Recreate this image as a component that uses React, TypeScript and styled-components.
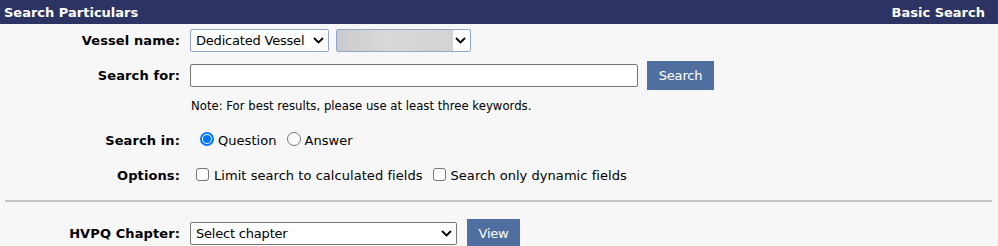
import styled, { createGlobalStyle } from "styled-components";

const GlobalStyle = createGlobalStyle`
  html, body {
    margin: 0;
    padding: 0;
    background: #f7f7f7;
  }
  body {
    font-family: "DejaVu Sans", Verdana, sans-serif;
    color: #000;
  }
`;

const Panel = styled.div`
  width: 998px;
  height: 246px;
  overflow: hidden;
  background: #f7f7f7;
`;

const TitleBar = styled.div`
  height: 24px;
  background: #2d3363;
  color: #fff;
  display: flex;
  align-items: center;
  justify-content: space-between;
  padding: 0 13px 0 4px;
  font-size: 13px;
  font-weight: bold;
  letter-spacing: 0;
`;

const Form = styled.div`
  display: grid;
  grid-template-columns: 180px 1fr;
  column-gap: 10px;
  align-items: center;
  padding-top: 5px;
`;

const Label = styled.label<{ $top?: number }>`
  justify-self: end;
  font-size: 13px;
  font-weight: bold;
  letter-spacing: 0.1px;
  margin-top: ${(p) => p.$top ?? 0}px;
`;

const Cell = styled.div<{ $top?: number }>`
  display: flex;
  align-items: center;
  margin-top: ${(p) => p.$top ?? 0}px;
`;

const SelectBox = styled.div<{ $width: number; $border: string; $skeleton?: boolean }>`
  position: relative;
  width: ${(p) => p.$width}px;
  height: 23px;
  box-sizing: border-box;
  border: 1px solid ${(p) => p.$border};
  border-radius: 2px;
  background: ${(p) =>
    p.$skeleton
      ? "linear-gradient(90deg, #cbcbce 0%, #d9d9dc 45%, #d3d3d6 100%) no-repeat left / calc(100% - 17px) 100%, #fff"
      : "#fff"};
  display: flex;
  align-items: center;
  padding-left: 5px;
  font-size: 13px;
  letter-spacing: -0.2px;
  margin-right: 7px;
`;

const Chevron = styled.svg`
  position: absolute;
  right: 4px;
  top: 7px;
`;

const TextInput = styled.div`
  width: 448px;
  height: 23px;
  box-sizing: border-box;
  border: 1px solid #767676;
  border-radius: 2px;
  background: #fff;
  margin-right: 9px;
`;

const Button = styled.button<{ $width: number }>`
  width: ${(p) => p.$width}px;
  height: 29px;
  border: none;
  background: #4f6fa0;
  color: #fff;
  font-family: "DejaVu Sans", Verdana, sans-serif;
  font-size: 13px;
  letter-spacing: -0.2px;
  padding: 0;
`;

const Note = styled.div`
  font-size: 11.7px;
  letter-spacing: 0;
  margin: 9px 0 0 1px;
`;

const Choice = styled.span`
  display: inline-flex;
  align-items: center;
  font-size: 13px;
  letter-spacing: 0.05px;
  margin-right: 10px;
`;

const Radio = styled.span<{ $checked?: boolean; $first?: boolean }>`
  width: 14px;
  height: 14px;
  box-sizing: border-box;
  border-radius: 50%;
  border: ${(p) => (p.$checked ? "2px solid #0075ff" : "1px solid #767676")};
  background: #fff;
  margin: 0 4px 2px ${(p) => (p.$first ? 10 : 0)}px;
  display: inline-flex;
  align-items: center;
  justify-content: center;
  &::after {
    content: "";
    display: ${(p) => (p.$checked ? "block" : "none")};
    width: 8px;
    height: 8px;
    border-radius: 50%;
    background: #0075ff;
  }
`;

const Check = styled.span<{ $first?: boolean }>`
  width: 13px;
  height: 13px;
  box-sizing: border-box;
  border: 1px solid #767676;
  border-radius: 3px;
  background: #fff;
  margin: 0 5px 2px ${(p) => (p.$first ? 6 : 0)}px;
`;

const Rule = styled.hr`
  margin: 17px 6px 0 5px;
  border: none;
  border-top: 2px solid #c3c3c3;
  grid-column: 1 / span 2;
`;

const ChevronIcon = () => (
  <Chevron width="11" height="7" viewBox="0 0 11 7">
    <path d="M1 1 L5.5 5.5 L10 1" fill="none" stroke="#000" strokeWidth="1.8" />
  </Chevron>
);

export default function App() {
  return (
    <Panel>
      <GlobalStyle />
      <TitleBar>
        <span>Search Particulars</span>
        <span>Basic Search</span>
      </TitleBar>
      <Form>
        <Label>Vessel name:</Label>
        <Cell>
          <SelectBox $width={139} $border="#8fa8c8">
            Dedicated Vessel
            <ChevronIcon />
          </SelectBox>
          <SelectBox $width={135} $border="#8fa8c8" $skeleton>
            <ChevronIcon />
          </SelectBox>
        </Cell>

        <Label $top={9}>Search for:</Label>
        <Cell $top={9}>
          <TextInput />
          <Button $width={67}>Search</Button>
        </Cell>

        <span />
        <Note>Note: For best results, please use at least three keywords.</Note>

        <Label $top={19}>Search in:</Label>
        <Cell $top={19}>
          <Choice>
            <Radio $checked $first />
            Question
          </Choice>
          <Choice>
            <Radio />
            Answer
          </Choice>
        </Cell>

        <Label $top={20}>Options:</Label>
        <Cell $top={20}>
          <Choice>
            <Check $first />
            Limit search to calculated fields
          </Choice>
          <Choice>
            <Check />
            Search only dynamic fields
          </Choice>
        </Cell>

        <Rule />

        <Label $top={17}>HVPQ Chapter:</Label>
        <Cell $top={17}>
          <SelectBox $width={267} $border="#767676" style={{ marginRight: 10 }}>
            Select chapter
            <ChevronIcon />
          </SelectBox>
          <Button $width={53}>View</Button>
        </Cell>
      </Form>
    </Panel>
  );
}
